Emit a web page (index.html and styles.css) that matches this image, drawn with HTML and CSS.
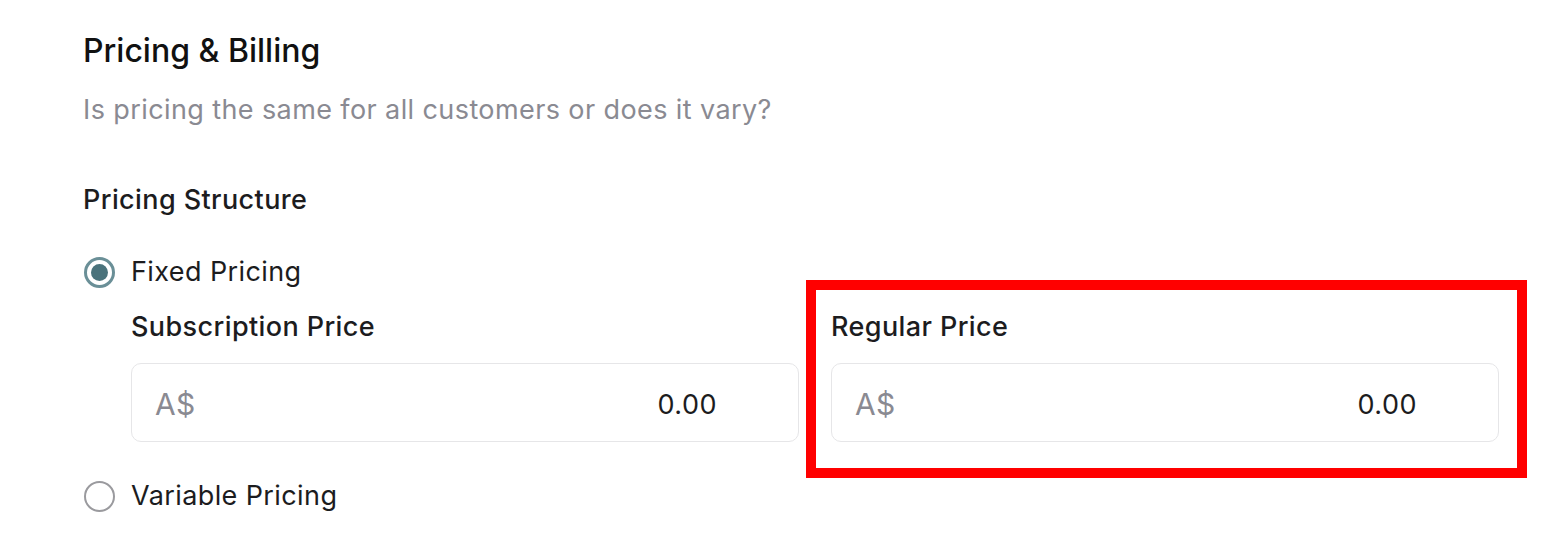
FILE: index.html
```html
<!DOCTYPE html>
<html lang="en">
<head>
<meta charset="utf-8">
<title>Pricing &amp; Billing</title>
<link rel="stylesheet" href="styles.css">
</head>
<body>
<section class="panel">
  <h2 class="title">Pricing &amp; Billing</h2>
  <p class="subtitle">Is pricing the same for all customers or does it vary?</p>
  <h3 class="group-label">Pricing Structure</h3>

  <div class="option">
    <label class="radio-row first">
      <span class="radio checked"><span class="dot"></span></span>
      <span class="radio-text">Fixed Pricing</span>
    </label>
    <div class="fields">
      <div class="field">
        <div class="field-label">Subscription Price</div>
        <div class="input">
          <span class="prefix">A$</span>
          <span class="value">0.00</span>
        </div>
      </div>
      <div class="field highlighted">
        <div class="field-label">Regular Price</div>
        <div class="input">
          <span class="prefix">A$</span>
          <span class="value">0.00</span>
        </div>
      </div>
    </div>
  </div>

  <div class="option">
    <label class="radio-row">
      <span class="radio"></span>
      <span class="radio-text">Variable Pricing</span>
    </label>
  </div>
</section>
</body>
</html>
```

FILE: styles.css
```css
* { box-sizing: border-box; }

html, body {
  margin: 0;
  padding: 0;
  background: #ffffff;
}

body {
  font-family: Inter, "Noto Sans", "Liberation Sans", sans-serif;
  color: #1c1c1e;
}

.panel {
  padding: 31px 0 0 83px;
  display: flex;
  flex-direction: column;
}

.title {
  margin: 0;
  font-size: 32px;
  line-height: 40px;
  font-weight: 500;
  color: #111111;
}

.subtitle {
  margin: 21px 0 0;
  font-size: 27px;
  line-height: 36px;
  letter-spacing: 0.4px;
  font-weight: 400;
  color: #8a8a92;
}

.group-label {
  margin: 54px 0 0;
  font-size: 27px;
  line-height: 36px;
  letter-spacing: 0.4px;
  font-weight: 500;
  color: #1c1c1e;
}

.option {
  display: flex;
  flex-direction: column;
}

.radio-row {
  display: flex;
  align-items: center;
  gap: 16px;
  margin-top: 36px;
  height: 36px;
}

.radio {
  width: 31px;
  height: 31px;
  border-radius: 50%;
  border: 2px solid #9a9a9e;
  display: flex;
  align-items: center;
  justify-content: center;
  flex: none;
  margin-left: 1px;
}

.radio.checked {
  border: 3px solid #6a8f97;
}

.radio .dot {
  width: 17px;
  height: 17px;
  border-radius: 50%;
  background: #4a727b;
}

.radio-text {
  font-size: 27px;
  line-height: 36px;
  letter-spacing: 0.4px;
  color: #1c1c1e;
}

.fields {
  margin-left: 48px;
  margin-top: 19px;
  display: grid;
  grid-template-columns: 668px 668px;
  column-gap: 32px;
}

.field {
  display: flex;
  flex-direction: column;
}

.field.highlighted {
  position: relative;
}

.field.highlighted::after {
  content: "";
  position: absolute;
  left: -25px;
  right: -28px;
  top: -29px;
  bottom: -36px;
  border: 10px solid #ff0000;
  pointer-events: none;
}

.field-label {
  font-size: 27px;
  line-height: 36px;
  letter-spacing: 0.4px;
  font-weight: 500;
  color: #1c1c1e;
}

.input {
  margin-top: 18px;
  height: 79px;
  border: 1.5px solid #e6e6e8;
  border-radius: 10px;
  display: flex;
  align-items: center;
  padding: 3px 81px 0 23px;
  background: #ffffff;
}

.prefix {
  font-size: 30px;
  letter-spacing: 0.3px;
  color: #8a8a92;
}

.value {
  margin-left: auto;
  font-size: 27px;
  letter-spacing: 0.5px;
  color: #1c1c1e;
}
```
